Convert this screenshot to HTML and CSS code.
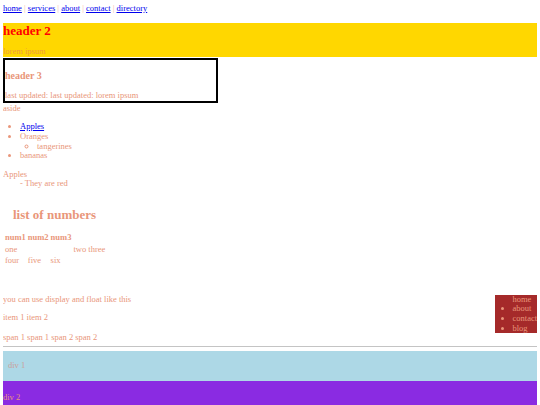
FILE: index.html
```html
<!DOCTYPE html>
<html>
<head>
<meta charset="utf-8">
<title>practice</title>
<link rel="stylesheet" href="styles.css">
</head>
<body>
<nav class="topnav"><a href="#">home</a> <span class="sep">|</span> <a href="#">services</a> <span class="sep">|</span> <a href="#">about</a> <span class="sep">|</span> <a href="#">contact</a> <span class="sep">|</span> <a href="#">directory</a></nav>
<header class="banner">
  <h2 class="banner-title">header 2</h2>
  <div class="banner-sub">lorem ipsum</div>
</header>
<section class="card">
  <h3 class="card-title">header 3</h3>
  <div class="card-meta">last updated: last updated: lorem ipsum</div>
</section>
<aside class="aside">aside</aside>
<ul class="fruits">
  <li><a href="#">Apples</a></li>
  <li>Oranges
    <ul class="sub">
      <li>tangerines</li>
    </ul>
  </li>
  <li>bananas</li>
</ul>
<dl class="defs">
  <dt>Apples</dt>
  <dd>- They are red</dd>
</dl>
<h2 class="numbers-title">list of numbers</h2>
<table class="numbers">
  <tr><th>num1</th><th>num2</th><th>num3</th><th></th></tr>
  <tr><td>one</td><td></td><td></td><td>two three</td></tr>
  <tr><td>four</td><td>five</td><td>six</td><td></td></tr>
</table>
<section class="floats">
  <nav class="sidenav">
    <ul>
      <li>home</li>
      <li>about</li>
      <li>contact</li>
      <li>blog</li>
    </ul>
  </nav>
  <p class="line">you can use display and float like this</p>
  <p class="line items"><span>item 1</span> <span>item 2</span></p>
  <p class="line spans"><span>span 1</span> <span>span 1</span> <span>span 2</span> <span>span 2</span></p>
</section>
<hr class="rule">
<div class="div1">div 1</div>
<div class="div2">div 2</div>
</body>
</html>
```
FILE: styles.css
```css
html, body {
  padding: 0;
}
body {
  margin: 4px 3px 3px;
  font-family: "Liberation Serif", "Times New Roman", serif;
  font-size: 8.5px;
  line-height: 9.7px;
  color: #e9967a;
  background: #fff;
}
a {
  color: #0000ee;
}
.topnav {
  display: block;
}
.sep {
  color: #f3b9a6;
}
.banner {
  margin-top: 9.3px;
  background: #ffd700;
}
.banner-title {
  margin: 0 0 9px;
  font-size: 13px;
  line-height: 15px;
  font-weight: bold;
  color: #ff0000;
}
.banner-sub {
  color: #f09a40;
}
.card {
  margin-top: 1px;
  width: 211px;
  border: 2px solid #000;
}
.card-title {
  margin: 10px 0 9.7px;
  font-size: 10px;
  line-height: 11.5px;
  font-weight: bold;
}
.aside {
  display: block;
  margin-top: 1.5px;
}
.fruits {
  margin: 8.5px 0;
  padding-left: 17px;
}
.sub {
  margin: 0;
  padding-left: 17px;
  list-style: circle;
}
.defs {
  margin: 0;
}
.defs dd {
  margin-left: 17px;
}
.numbers-title {
  margin: 17.5px 0 10px 10px;
  font-size: 13px;
  line-height: 15px;
  font-weight: bold;
}
.numbers {
  border-spacing: 1px;
  font-size: 8.5px;
}
.numbers th, .numbers td {
  padding: 0.5px 0.5px;
  text-align: left;
}
.numbers th:first-child, .numbers td:first-child {
  padding-left: 1px;
}
.floats {
  margin-top: 27px;
}
.sidenav {
  float: right;
  width: 42px;
  background: #a52a2a;
}
.sidenav ul {
  margin: 0;
  padding-left: 17.5px;
  white-space: nowrap;
  overflow: hidden;
}
.sidenav li:first-child {
  list-style: none;
}
.line {
  margin: 0;
}
.items {
  margin-top: 8.3px;
}
.spans {
  margin-top: 10.3px;
}
.rule {
  clear: both;
  margin: 4px 0;
  border: 0;
  border-top: 1px solid #c4c4c4;
  height: 0;
}
.div1 {
  padding: 10px 5px;
  background: #add8e6;
  color: #c9a29a;
}
.div2 {
  padding: 12px 0 6px;
  background: #8a2be2;
}
```
